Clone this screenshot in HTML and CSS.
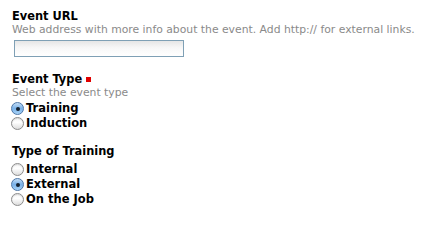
FILE: index.html
```html
<!DOCTYPE html>
<html>
<head>
<meta charset="utf-8">
<link rel="stylesheet" href="styles.css">
</head>
<body>
<form class="form">
  <div class="field field-url">
    <label class="label" for="url">Event URL</label>
    <div class="desc">Web address with more info about the event. Add http:// for external links.</div>
    <input class="text" id="url" type="text">
  </div>
  <div class="field field-type">
    <div class="label">Event Type <span class="req"></span></div>
    <div class="desc">Select the event type</div>
    <div class="options options-first">
      <label class="option"><input type="radio" name="type" checked><span>Training</span></label>
      <label class="option"><input type="radio" name="type"><span>Induction</span></label>
    </div>
  </div>
  <div class="field field-training">
    <div class="label">Type of Training</div>
    <div class="options options-gap">
      <label class="option"><input type="radio" name="tt"><span>Internal</span></label>
      <label class="option"><input type="radio" name="tt" checked><span>External</span></label>
      <label class="option"><input type="radio" name="tt"><span>On the Job</span></label>
    </div>
  </div>
</form>
</body>
</html>
```
FILE: styles.css
```css
html, body {
  margin: 0;
  padding: 0;
  background: #fff;
}
body {
  font-family: "DejaVu Sans", Verdana, sans-serif;
  color: #000;
}
.form {
  display: flex;
  flex-direction: column;
  padding: 9px 11px 0 11px;
}
.field {
  display: flex;
  flex-direction: column;
  align-items: flex-start;
}
.label {
  display: flex;
  align-items: center;
  gap: 4px;
  font-weight: bold;
  font-size: 11.4px;
  line-height: 14px;
  padding-left: 1px;
}
.req {
  display: inline-block;
  width: 5px;
  height: 5px;
  background: #e00000;
  margin-top: 1px;
}
.desc {
  font-size: 10.8px;
  line-height: 14px;
  color: #8a8a8a;
  padding-left: 1px;
  white-space: nowrap;
}
.text {
  -webkit-appearance: none;
  appearance: none;
  box-sizing: border-box;
  width: 170px;
  height: 17px;
  margin: 3px 0 0 3px;
  padding: 0;
  border: 1px solid #7fa0b5;
  border-radius: 0;
  background: linear-gradient(#e6e6e6, #f7f7f7 45%, #ffffff);
}
.field-type {
  margin-top: 15px;
}
.field-training {
  margin-top: 13px;
}
.options {
  display: flex;
  flex-direction: column;
}
.options-first {
  margin-top: 1px;
}
.options-gap {
  margin-top: 4px;
}
.option {
  display: flex;
  align-items: center;
  gap: 2px;
  height: 15px;
  font-weight: bold;
  font-size: 11.5px;
  line-height: 15px;
}
.option input {
  -webkit-appearance: none;
  appearance: none;
  box-sizing: border-box;
  width: 13px;
  height: 13px;
  margin: 0;
  border-radius: 50%;
  border: 1px solid #8c8c8c;
  background: linear-gradient(#f4f4f4, #ffffff 40%, #dcdcdc);
  box-shadow: inset 0 1px 1px rgba(0,0,0,0.12);
  position: relative;
}
.option input:checked {
  border-color: #4d77a8;
  background: linear-gradient(#c3ddf6, #79b1e8 50%, #a8d3f7);
  box-shadow: none;
}
.option input:checked::after {
  content: "";
  position: absolute;
  left: 3.5px;
  top: 3.5px;
  width: 4px;
  height: 4px;
  border-radius: 50%;
  background: #14202e;
}
```
